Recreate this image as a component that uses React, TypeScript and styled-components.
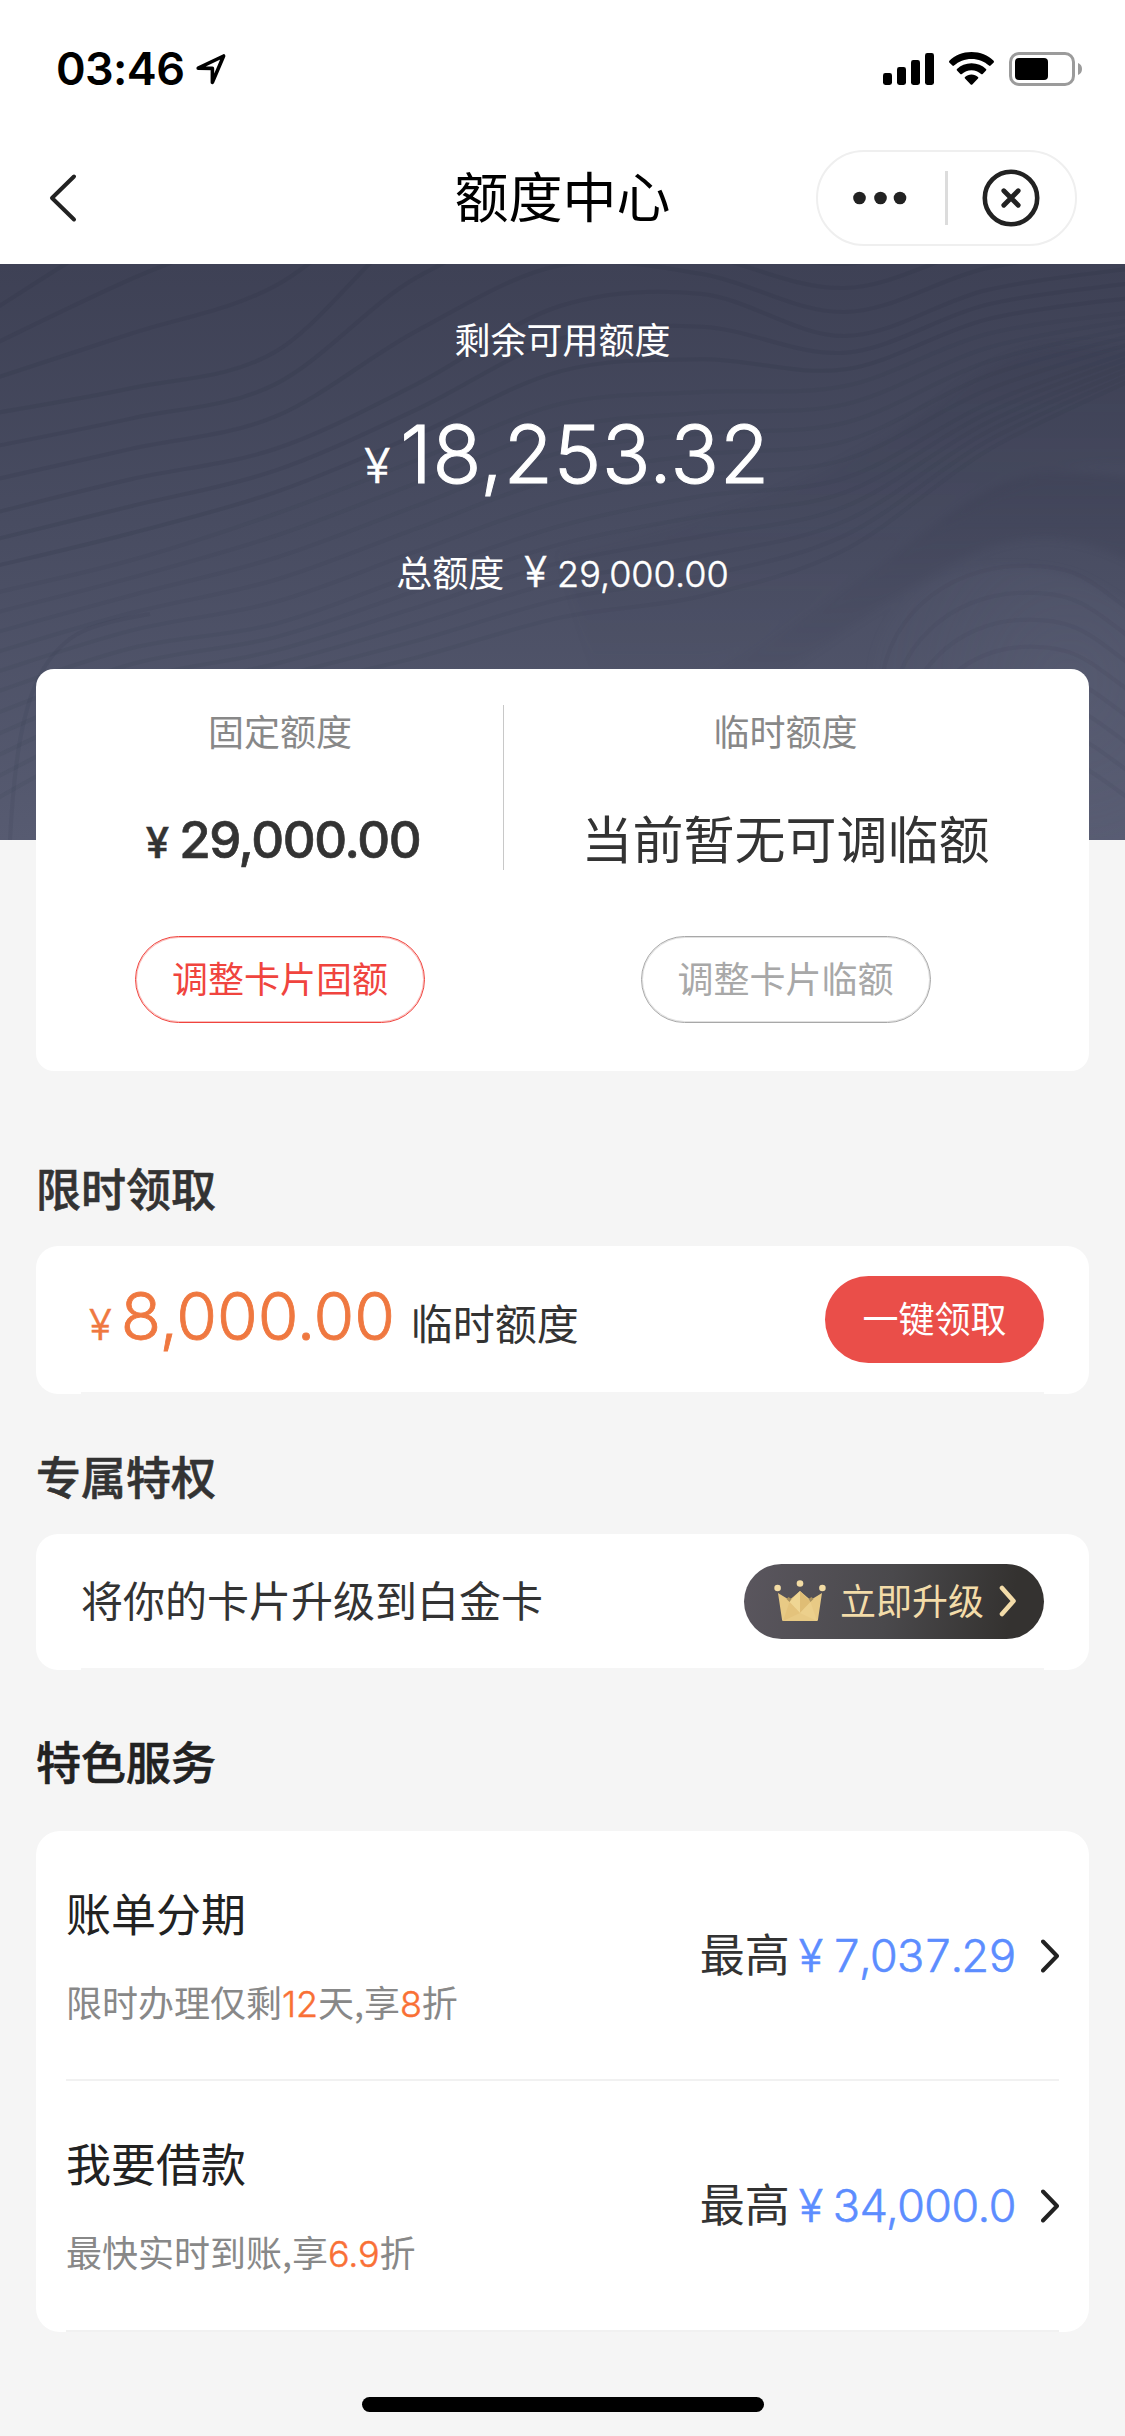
import React from "react";
import styled, { createGlobalStyle } from "styled-components";

const cjk = `"Noto Sans CJK SC", "Noto Sans", sans-serif`;
const latin = `Inter, "Noto Sans CJK SC", sans-serif`;

const GlobalStyle = createGlobalStyle`
  * { box-sizing: border-box; }
  html, body { margin: 0; padding: 0; background: #f5f5f5; }
  body { font-family: ${cjk}; color: #333; -webkit-font-smoothing: antialiased; }
  button { font: inherit; margin: 0; cursor: pointer; white-space: nowrap; }
  svg { display: block; flex: none; }
`;

const Screen = styled.div`
  width: 1125px;
  height: 2436px;
  display: flex;
  flex-direction: column;
  background: #f5f5f5;
  overflow: hidden;
`;

const StatusBar = styled.header`
  height: 132px;
  flex: none;
  background: #fff;
  display: flex;
  align-items: center;
  justify-content: space-between;
  padding: 6px 42px 0 56px;
`;

const Clock = styled.div`
  display: flex;
  align-items: center;
  gap: 12px;
  font-family: ${latin};
  font-weight: 600;
  font-size: 45px;
  line-height: 46px;
  letter-spacing: -0.6px;
  color: #000;
`;

const StatusIcons = styled.div`
  display: flex;
  align-items: center;
  gap: 15px;
`;

const NavBar = styled.nav`
  height: 132px;
  flex: none;
  background: #fff;
  display: grid;
  grid-template-columns: 1fr auto 1fr;
  align-items: center;
  padding: 0 48px 0 48px;
`;

const NavTitle = styled.h1`
  margin: 0;
  padding-bottom: 7px;
  font-weight: 400;
  font-size: 54px;
  line-height: 60px;
  color: #000;
`;

const Capsule = styled.div`
  justify-self: end;
  width: 261px;
  height: 96px;
  border: 2px solid #efefef;
  border-radius: 48px;
  display: flex;
  align-items: center;
  padding: 0 35px 0 35px;
`;

const CapsuleDivider = styled.span`
  width: 3px;
  height: 54px;
  background: #dcdcdc;
  margin: 0 34px 0 38px;
`;

const Hero = styled.section`
  position: relative;
  height: 576px;
  flex: none;
  background: linear-gradient(180deg, #3e4155 0%, #484c61 45%, #575b71 100%);
  color: #fff;
  display: flex;
  flex-direction: column;
  align-items: center;
  padding-top: 56px;
`;

const HeroPattern = styled.svg`
  position: absolute;
  inset: 0;
`;

const HeroLabel = styled.div`
  position: relative;
  font-size: 36px;
  line-height: 36px;
`;

const Baseline = styled.div<{ $gap?: number; $mt?: number; $ml?: number }>`
  position: relative;
  display: flex;
  align-items: baseline;
  gap: ${(p) => p.$gap ?? 0}px;
  margin-top: ${(p) => p.$mt ?? 0}px;
  margin-left: ${(p) => p.$ml ?? 0}px;
  white-space: nowrap;
`;

const Num = styled.span<{ $size: number; $weight?: number; $color?: string; $ls?: number; $tabular?: boolean }>`
  font-family: ${latin};
  font-size: ${(p) => p.$size}px;
  line-height: 1;
  font-weight: ${(p) => p.$weight ?? 300};
  -webkit-text-stroke: ${(p) => p.$size * 0.013}px currentColor;
  letter-spacing: ${(p) => p.$ls ?? 0}px;
  font-variant-numeric: ${(p) => (p.$tabular ? "tabular-nums" : "normal")};
  color: ${(p) => p.$color ?? "inherit"};
`;

const Txt = styled.span<{ $size: number; $color?: string }>`
  font-size: ${(p) => p.$size}px;
  line-height: 44px;
  color: ${(p) => p.$color ?? "inherit"};
`;

const Card = styled.section<{ $height: number; $radius?: number }>`
  height: ${(p) => p.$height}px;
  flex: none;
  margin: 0 36px;
  background: #fff;
  border-radius: ${(p) => p.$radius ?? 22}px;
`;

const QuotaCard = styled(Card)`
  position: relative;
  margin-top: -171px;
  padding: 0 22px 0 21px;
  display: flex;
`;

const QuotaColumn = styled.div<{ $width?: number }>`
  ${(p) => (p.$width ? `width: ${p.$width}px; flex: none;` : "flex: 1;")}
  display: flex;
  flex-direction: column;
  align-items: center;
  padding-top: 43px;
`;

const QuotaDivider = styled.span`
  width: 1px;
  height: 165px;
  margin-top: 36px;
  background: #c8c8c8;
`;

const QuotaLabel = styled.div`
  font-size: 36px;
  line-height: 36px;
  color: #888;
`;

const QuotaValue = styled.div<{ $shift: number }>`
  height: 66px;
  margin: 57px 0 65px;
  padding-top: ${(p) => p.$shift}px;
  font-size: 51px;
  line-height: 60px;
  white-space: nowrap;
`;

const PillButton = styled.button<{ $tone: string; $soft: string }>`
  width: 290px;
  height: 87px;
  border: 1px solid ${(p) => p.$tone};
  box-shadow: inset 0 0 0 1px ${(p) => p.$soft};
  border-radius: 44px;
  background: #fff;
  color: ${(p) => p.$tone};
  font-size: 36px;
  line-height: 36px;
  padding: 0 0 5px;
`;

const SectionTitle = styled.h2<{ $mt: number; $mb: number; $color?: string }>`
  flex: none;
  margin: ${(p) => p.$mt}px 36px ${(p) => p.$mb}px;
  font-size: 45px;
  line-height: 45px;
  font-weight: 500;
  -webkit-text-stroke: 0.6px currentColor;
  color: ${(p) => p.$color ?? "#333"};
`;

const OfferRow = styled.div`
  height: 100%;
  margin: 0 45px 0 45px;
  border-bottom: 2px solid #f5f5f5;
  display: flex;
  align-items: center;
  justify-content: space-between;
`;

const Offer = styled.div`
  padding: 0 0 6px 8px;
`;

const ClaimButton = styled.button`
  width: 219px;
  height: 87px;
  border: 0;
  border-radius: 44px;
  background: #ea4e49;
  color: #fff;
  font-size: 36px;
  line-height: 36px;
  padding: 0 0 4px;
`;

const UpgradeText = styled.div`
  font-size: 42px;
  line-height: 50px;
  padding-bottom: 4px;
`;

const UpgradeButton = styled.button`
  width: 300px;
  height: 75px;
  border: 0;
  border-radius: 38px;
  background: linear-gradient(100deg, #5a565e 0%, #4a494c 48%, #343230 88%);
  color: #f3dca9;
  display: flex;
  align-items: center;
  font-size: 36px;
  line-height: 36px;
  padding: 0 0 0 30px;
`;

const UpgradeLabel = styled.span`
  padding-bottom: 4px;
  margin: 0 15px 0 14px;
`;

const ServiceRow = styled.div<{ $height: number; $top: number }>`
  height: ${(p) => p.$height}px;
  margin: 0 30px;
  padding-top: ${(p) => p.$top}px;
  border-bottom: 2px solid #f1f1f1;
  display: flex;
  justify-content: space-between;
`;

const ServiceInfo = styled.div`
  display: flex;
  flex-direction: column;
  gap: 46px;
`;

const ServiceName = styled.div`
  font-size: 45px;
  line-height: 45px;
  color: #222;
`;

const ServiceHint = styled.div`
  display: flex;
  align-items: baseline;
  font-size: 36px;
  line-height: 40px;
  color: #888;
`;

const ServiceAmount = styled.div`
  display: flex;
  align-items: center;
  height: 60px;
  margin-top: 34px;
  gap: 26px;

  > svg {
    margin-top: 3px;
  }
`;

const HomeIndicator = styled.div`
  width: 402px;
  height: 15px;
  flex: none;
  margin: auto auto 24px;
  border-radius: 8px;
  background: #000;
`;

/* Contour lines: each key curve is sampled at nine columns across the hero
   and the lines in between are interpolated. */
const columns = [-10, 132, 275, 417, 560, 702, 845, 987, 1135];
const keys = [
  [48, -40, -110, -170, -200, -200, -200, -220, -240],
  [150, 124, 88, -40, -80, -30, 0, -40, -60],
  [250, 215, 185, 120, 42, 30, 72, 26, 4],
  [330, 296, 250, 196, 140, 128, 122, 70, 48],
  [430, 384, 360, 310, 262, 232, 214, 140, 86],
  [560, 480, 440, 410, 372, 352, 300, 196, 120],
];

function smooth(ys: number[]): string {
  const pts = ys.map((y, i) => [columns[i], y]);
  let d = `M${pts[0][0]} ${pts[0][1]}`;
  for (let i = 0; i < pts.length - 1; i++) {
    const a = pts[Math.max(i - 1, 0)];
    const b = pts[i];
    const c = pts[i + 1];
    const e = pts[Math.min(i + 2, pts.length - 1)];
    d += `C${b[0] + (c[0] - a[0]) / 6} ${b[1] + (c[1] - a[1]) / 6} ${c[0] - (e[0] - b[0]) / 6} ${c[1] - (e[1] - b[1]) / 6} ${c[0]} ${c[1]}`;
  }
  return d;
}

const stepCounts = [3, 3, 3, 5, 6];
const contours: { d: string; k: number }[] = [];
keys.slice(0, -1).forEach((from, k) => {
  const steps = stepCounts[k];
  for (let s = 0; s < steps; s++) {
    contours.push({ k, d: smooth(from.map((y, i) => y + ((keys[k + 1][i] - y) * s) / steps)) });
  }
});

const hillLines = Array.from({ length: 8 }, (_, i) => {
  const o = i * 27;
  return `M${880 + i * 9} ${440 + o}C${880 + i * 10} ${350 + o} ${950 + i * 5} ${305 + o} ${1015 + i * 2} ${302 + o}S${1090} ${318 + o} 1135 ${350 + o}`;
});

const Waves = () => (
  <HeroPattern width="1125" height="576" viewBox="0 0 1125 576" fill="none">
    <defs>
      <linearGradient id="ridge" x1="0" y1="0" x2="0" y2="1">
        <stop offset="0" stopColor="#2e3044" stopOpacity="0.2" />
        <stop offset="1" stopColor="#2e3044" stopOpacity="0" />
      </linearGradient>
      <radialGradient id="hill" cx="0.75" cy="0.4" r="0.7">
        <stop offset="0" stopColor="#70758c" stopOpacity="0.2" />
        <stop offset="1" stopColor="#70758c" stopOpacity="0.04" />
      </radialGradient>
      <filter id="soft" x="-10%" y="-10%" width="120%" height="120%" colorInterpolationFilters="sRGB">
        <feGaussianBlur stdDeviation="4" />
      </filter>
    </defs>
    {contours.map(({ d, k }, i) => (
      <path key={i} d={d} stroke="#2c2e42" strokeOpacity={k < 3 ? 0.17 : 0.08} strokeWidth="4" />
    ))}
    <g filter="url(#soft)">
      <path d="M560 290C760 250 870 190 950 130S1060 82 1135 84V200C1040 190 940 260 860 320S700 400 600 430Z" fill="url(#ridge)" opacity="0.6" />
      <path d="M640 440C800 370 880 300 950 250S1060 205 1135 214V300C1040 250 980 280 900 330S760 430 700 460Z" fill="url(#ridge)" />
      <path d="M872 430C866 340 940 300 1010 302S1090 318 1135 345V590H872Z" fill="url(#hill)" />
    </g>
    {hillLines.map((d, i) => (
      <path key={i} d={d} stroke="#3c3f55" strokeOpacity="0.13" strokeWidth="4" />
    ))}
    <path d="M10 576C14 500 22 440 44 404S90 360 150 350" stroke="#2c2e42" strokeOpacity="0.1" strokeWidth="4" />
  </HeroPattern>
);

const LocationArrow = () => (
  <svg width="30" height="32" viewBox="0 0 30 32" fill="none" stroke="#000" strokeWidth="3.6" strokeLinejoin="round">
    <path d="M2.2 15.2L27.6 3L16.4 29.4V15.4Z" />
  </svg>
);

const Signal = () => (
  <svg width="51" height="34" viewBox="0 0 51 34" fill="#000">
    <rect x="0" y="21" width="9" height="12" rx="2.4" />
    <rect x="14" y="15" width="9" height="18" rx="2.4" />
    <rect x="28" y="8" width="9" height="25" rx="2.4" />
    <rect x="42" y="1" width="9" height="32" rx="2.4" />
  </svg>
);

const Wifi = () => (
  <svg width="45" height="34" viewBox="0 0 45 34" fill="#000">
    <path d="M22.5 0C31.2 0 39 3.3 44.6 8.8C45.1 9.3 45.1 9.9 44.7 10.4L41.6 13.6C41.1 14.1 40.5 14.1 40 13.6C35.4 9.3 29.3 6.9 22.5 6.9S9.6 9.3 5 13.6C4.5 14.1 3.9 14.1 3.4 13.6L0.3 10.4C-0.1 9.9-0.1 9.3 0.4 8.8C6 3.3 13.8 0 22.5 0Z" />
    <path d="M22.5 11.3C28.2 11.3 33.3 13.5 37 17C37.5 17.5 37.5 18.1 37 18.6L33.7 21.9C33.2 22.4 32.6 22.4 32.1 21.9C29.5 19.6 26.2 18.2 22.5 18.2S15.5 19.6 12.9 21.9C12.4 22.4 11.8 22.4 11.3 21.9L8 18.6C7.5 18.1 7.5 17.5 8 17C11.7 13.5 16.8 11.3 22.5 11.3Z" />
    <path d="M22.5 22.6C25 22.6 27.3 23.5 29 25C29.5 25.5 29.5 26.1 29 26.6L23.3 32.4C22.8 32.9 22.2 32.9 21.7 32.4L16 26.6C15.5 26.1 15.5 25.5 16 25C17.7 23.5 20 22.6 22.5 22.6Z" />
  </svg>
);

const Battery = () => (
  <svg width="74" height="34" viewBox="0 0 74 34" fill="none">
    <rect x="1.5" y="1.5" width="63" height="31" rx="8.5" stroke="#9b9b9b" strokeWidth="3" />
    <rect x="6" y="6" width="33" height="22" rx="4" fill="#000" />
    <path d="M69 11C71.6 12 73 14.3 73 17S71.6 22 69 23Z" fill="#9b9b9b" />
  </svg>
);

const Back = () => (
  <svg width="30" height="52" viewBox="0 0 30 52" fill="none" stroke="#222" strokeWidth="4" strokeLinecap="round" strokeLinejoin="round">
    <path d="M26 4.5L4 26L26 47.5" />
  </svg>
);

const More = () => (
  <svg width="54" height="14" viewBox="0 0 54 14" fill="#222">
    <circle cx="6.5" cy="7" r="6.3" />
    <circle cx="27.5" cy="7" r="6.3" />
    <circle cx="47" cy="7" r="6.3" />
  </svg>
);

const Close = () => (
  <svg width="58" height="58" viewBox="0 0 58 58" fill="none" stroke="#222" strokeLinecap="round">
    <circle cx="29" cy="29" r="26.2" strokeWidth="4.6" />
    <path d="M21.8 21.8L36.2 36.2M36.2 21.8L21.8 36.2" strokeWidth="4.8" />
  </svg>
);

const Chevron = () => (
  <svg width="18" height="34" viewBox="0 0 18 34" fill="none" stroke="#222" strokeWidth="4" strokeLinecap="round" strokeLinejoin="round">
    <path d="M2 2.5L16 17L2 31.5" />
  </svg>
);

const GoldChevron = () => (
  <svg width="18" height="32" viewBox="0 0 18 32" fill="none" stroke="#f3dca9" strokeWidth="4.6" strokeLinecap="round" strokeLinejoin="round">
    <path d="M3 3L14.5 16L3 29" />
  </svg>
);

const Crown = () => (
  <svg width="52" height="42" viewBox="0 0 52 42">
    <path d="M4 13L15.5 20L26 11L36.5 20L48 13L44 39.5C43.9 40.5 43.4 41 42.5 41H9.5C8.6 41 8.1 40.5 8 39.5Z" fill="#e8ca85" />
    <path d="M26 11L36.5 22L26 33Z" fill="#dfbd75" />
    <path d="M26 11L15.5 22L26 33Z" fill="#efd694" />
    <path d="M15.5 22L26 33L9 41Z" fill="#e4c37c" />
    <path d="M36.5 22L26 33L43 41Z" fill="#ecd08c" />
    <path d="M14.5 17L17.500 19L15.500 22L12.500 19ZM37.500 17L34.500 19L36.500 22L39.500 19Z" fill="#a8905f" />
    <circle cx="3.6" cy="8" r="3.3" fill="#f3dca4" />
    <circle cx="26" cy="3.5" r="3.3" fill="#f3dca4" />
    <circle cx="48.4" cy="8" r="3.3" fill="#f3dca4" />
  </svg>
);

const Highlight = ({ children }: { children: React.ReactNode }) => (
  <Num $size={36} $color="#f97035" $ls={-0.2}>{children}</Num>
);

const Amount = ({ value }: { value: string }) => (
  <ServiceAmount>
    <Baseline $gap={9}>
      <Txt $size={45}>最高</Txt>
      <Baseline $gap={9}>
        <Num $size={45} $color="#5c8dff">¥</Num>
        <Num $size={45} $color="#5c8dff" $ls={-2} $tabular>{value}</Num>
      </Baseline>
    </Baseline>
    <Chevron />
  </ServiceAmount>
);

export default function App() {
  return (
    <Screen>
      <GlobalStyle />
      <StatusBar>
        <Clock>
          03:46
          <LocationArrow />
        </Clock>
        <StatusIcons>
          <Signal />
          <Wifi />
          <Battery />
        </StatusIcons>
      </StatusBar>
      <NavBar>
        <Back />
        <NavTitle>额度中心</NavTitle>
        <Capsule>
          <More />
          <CapsuleDivider />
          <Close />
        </Capsule>
      </NavBar>

      <Hero>
        <Waves />
        <HeroLabel>剩余可用额度</HeroLabel>
        <Baseline $gap={10} $mt={58} $ml={9}>
          <Num $size={48}>¥</Num>
          <Num $size={80} $ls={0.8}>18,253.32</Num>
        </Baseline>
        <Baseline $gap={20} $mt={55}>
          <Txt $size={36}>总额度</Txt>
          <Baseline $gap={10}>
            <Num $size={42}>¥</Num>
            <Num $size={36} $ls={0}>29,000.00</Num>
          </Baseline>
        </Baseline>
      </Hero>

      <QuotaCard $height={402} $radius={18}>
        <QuotaColumn $width={446}>
          <QuotaLabel>固定额度</QuotaLabel>
          <QuotaValue $shift={9}>
            <Baseline $gap={10} $ml={6}>
              <Num $size={42} $weight={500}>¥</Num>
              <Num $size={51} $weight={500} $ls={-1.4}>29,000.00</Num>
            </Baseline>
          </QuotaValue>
          <PillButton $tone="#f0443e" $soft="rgba(240, 68, 62, 0.35)">调整卡片固额</PillButton>
        </QuotaColumn>
        <QuotaDivider />
        <QuotaColumn>
          <QuotaLabel>临时额度</QuotaLabel>
          <QuotaValue $shift={2}>当前暂无可调临额</QuotaValue>
          <PillButton $tone="#a8a8a8" $soft="rgba(168, 168, 168, 0.35)">调整卡片临额</PillButton>
        </QuotaColumn>
      </QuotaCard>

      <SectionTitle $mt={94} $mb={36}>限时领取</SectionTitle>
      <Card $height={148}>
        <OfferRow>
          <Offer>
            <Baseline $gap={16}>
              <Baseline $gap={9}>
                <Num $size={42} $color="#ef7840">¥</Num>
                <Num $size={66} $color="#ef7840" $ls={-0.1}>8,000.00</Num>
              </Baseline>
              <Txt $size={42}>临时额度</Txt>
            </Baseline>
          </Offer>
          <ClaimButton>一键领取</ClaimButton>
        </OfferRow>
      </Card>

      <SectionTitle $mt={59} $mb={36}>专属特权</SectionTitle>
      <Card $height={136}>
        <OfferRow>
          <UpgradeText>将你的卡片升级到白金卡</UpgradeText>
          <UpgradeButton>
            <Crown />
            <UpgradeLabel>立即升级</UpgradeLabel>
            <GoldChevron />
          </UpgradeButton>
        </OfferRow>
      </Card>

      <SectionTitle $mt={68} $mb={48} $color="#222">特色服务</SectionTitle>
      <Card $height={501} $radius={24}>
        <ServiceRow $height={250} $top={59}>
          <ServiceInfo>
            <ServiceName>账单分期</ServiceName>
            <ServiceHint>
              限时办理仅剩<Highlight>12</Highlight>天,享<Highlight>8</Highlight>折
            </ServiceHint>
          </ServiceInfo>
          <Amount value="7,037.29" />
        </ServiceRow>
        <ServiceRow $height={251} $top={59}>
          <ServiceInfo>
            <ServiceName>我要借款</ServiceName>
            <ServiceHint>
              最快实时到账,享<Highlight>6.9</Highlight>折
            </ServiceHint>
          </ServiceInfo>
          <Amount value="34,000.0" />
        </ServiceRow>
      </Card>

      <HomeIndicator />
    </Screen>
  );
}
